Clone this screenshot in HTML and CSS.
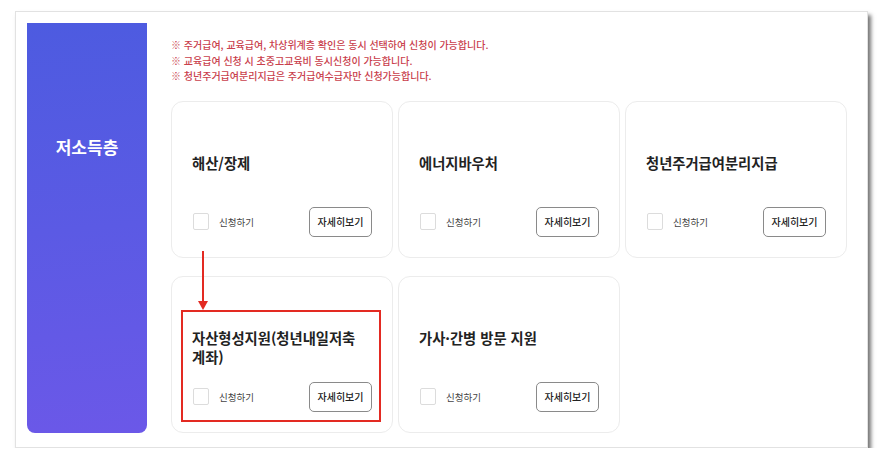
FILE: index.html
```html
<!DOCTYPE html>
<html lang="ko">
<head>
  <meta charset="UTF-8">
  <meta name="viewport" content="width=device-width, initial-scale=1.0">
  <title>저소득층</title>
  <link rel="stylesheet" href="styles.css">
</head>
<body>
  <div class="frame">
    <aside class="side">
      <h2>저소득층</h2>
    </aside>

    <main class="content">
      <div class="notes">
        <p>※ 주거급여, 교육급여, 차상위계층 확인은 동시 선택하여 신청이 가능합니다.</p>
        <p>※ 교육급여 신청 시 초중고교육비 동시신청이 가능합니다.</p>
        <p>※ 청년주거급여분리지급은 주거급여수급자만 신청가능합니다.</p>
      </div>

      <div class="cards">
        <div class="card">
          <h3>해산/장제</h3>
          <div class="foot">
            <label><span class="check"></span>신청하기</label>
            <button>자세히보기</button>
          </div>
        </div>
        <div class="card">
          <h3>에너지바우처</h3>
          <div class="foot">
            <label><span class="check"></span>신청하기</label>
            <button>자세히보기</button>
          </div>
        </div>
        <div class="card">
          <h3>청년주거급여분리지급</h3>
          <div class="foot">
            <label><span class="check"></span>신청하기</label>
            <button>자세히보기</button>
          </div>
        </div>
        <div class="card">
          <svg class="arrow" width="12" height="60" viewBox="0 0 12 60">
            <line x1="6" y1="0" x2="6" y2="52" stroke="#e32a22" stroke-width="2"/>
            <polygon points="1,50 11,50 6,59" fill="#e32a22"/>
          </svg>
          <div class="mark"></div>
          <h3>자산형성지원(청년내일저축<br>계좌)</h3>
          <div class="foot">
            <label><span class="check"></span>신청하기</label>
            <button>자세히보기</button>
          </div>
        </div>
        <div class="card">
          <h3>가사·간병 방문 지원</h3>
          <div class="foot">
            <label><span class="check"></span>신청하기</label>
            <button>자세히보기</button>
          </div>
        </div>
      </div>
    </main>
  </div>
</body>
</html>
```

FILE: styles.css
```css
body {
  margin: 0;
  background: #fff;
  font-family: "Noto Sans CJK KR", "Noto Sans", sans-serif;
}
.frame {
  margin: 11px 0 0 15px;
  width: 853px;
  height: 437px;
  box-sizing: border-box;
  border: 1px solid #e2e2e2;
  box-shadow: 3px 4px 4px rgba(0, 0, 0, 0.55);
  background: #fff;
  display: flex;
  padding: 11px 19px 14px 11px;
}
.side {
  width: 120px;
  flex: none;
  background: linear-gradient(175deg, #4d5be0 0%, #5b5ae4 50%, #6b58e8 100%);
  border-radius: 0 0 8px 8px;
  color: #fff;
  text-align: center;
}
.side h2 {
  margin: 0;
  padding-top: 112px;
  font-size: 17px;
  line-height: 24px;
  font-weight: 700;
}
.content {
  margin-left: 24px;
  flex: 1;
}
.notes {
  padding-top: 14px;
  margin-bottom: 17px;
}
.notes p {
  margin: 0;
  font-size: 10px;
  line-height: 15.5px;
  color: #c9404c;
  font-weight: 500;
}
.cards {
  display: grid;
  grid-template-columns: repeat(3, 222px);
  grid-auto-rows: 157px;
  column-gap: 5px;
  row-gap: 18px;
}
.card {
  position: relative;
  box-sizing: border-box;
  border: 1px solid #ececec;
  border-radius: 12px;
  padding: 51px 20px 20px 20px;
  display: flex;
  flex-direction: column;
}
.card h3 {
  margin: 0;
  font-size: 14.3px;
  line-height: 19px;
  font-weight: 700;
  color: #222;
}
.foot {
  margin-top: auto;
  display: flex;
  align-items: center;
  justify-content: space-between;
}
.foot label {
  display: flex;
  align-items: center;
  font-size: 9.5px;
  color: #444;
}
.check {
  width: 14px;
  height: 15px;
  border: 1px solid #dcdcdc;
  border-radius: 2px;
  margin: 0 10px 0 1px;
}
.foot button {
  width: 63px;
  height: 30px;
  border: 1.5px solid #8a8a8a;
  border-radius: 5px;
  background: #fff;
  font-family: inherit;
  font-size: 10px;
  font-weight: 500;
  color: #222;
  padding: 0;
}
.mark {
  position: absolute;
  left: 9px;
  top: 33px;
  width: 200px;
  height: 112px;
  border: 2px solid #e32a22;
  box-sizing: border-box;
}
.arrow {
  position: absolute;
  left: 25px;
  top: -26px;
  z-index: 2;
}
```
